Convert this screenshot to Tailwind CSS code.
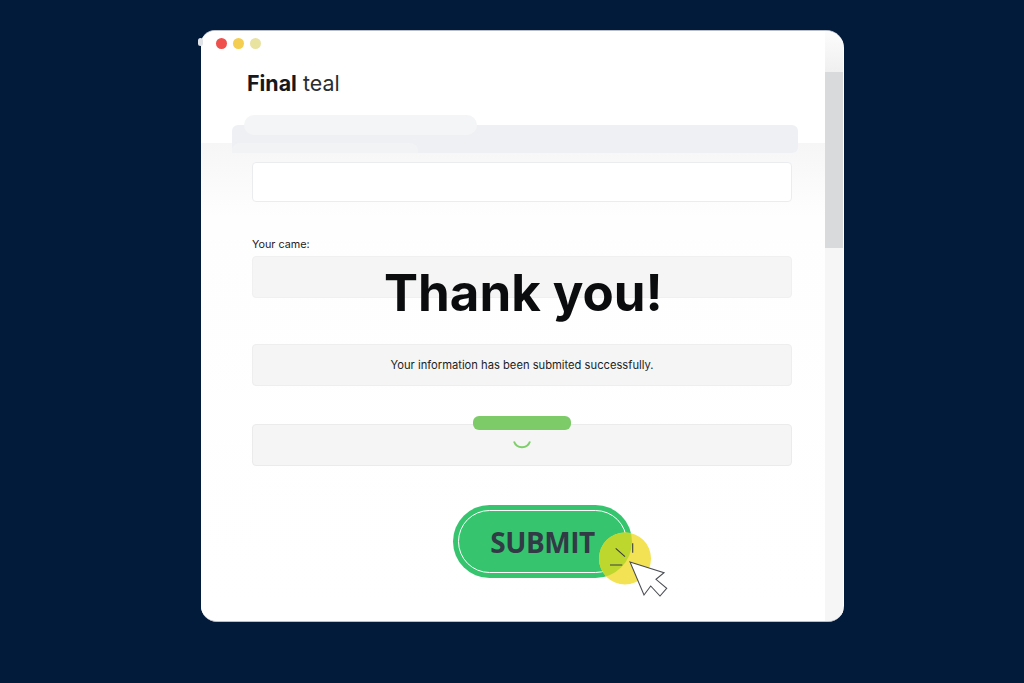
<!DOCTYPE html>
<html>
<head>
<meta charset="utf-8">
<script src="https://cdn.jsdelivr.net/npm/@tailwindcss/browser@4"></script>
</head>
<body class="m-0 w-[1024px] h-[683px] overflow-hidden bg-[#031b3a] font-['Inter',sans-serif]">
  <div class="pt-[30px] pl-[201px]">
    <div class="relative flex w-[643px] h-[592px] bg-white rounded-tl-[14px] rounded-tr-[18px] rounded-b-[16px] overflow-hidden border-t border-b border-[#b9bec8]">
      <main class="w-[624px] flex flex-col bg-[linear-gradient(to_bottom,#fff_112px,#f6f6f7_112px,#fefefe_185px,#fff_100%)]">
        <div class="flex gap-[6px] pl-[15px] pt-[7px]">
          <span class="w-[11px] h-[11px] rounded-full bg-[#f0504c]"></span>
          <span class="w-[11px] h-[11px] rounded-full bg-[#f4ce50]"></span>
          <span class="w-[11px] h-[11px] rounded-full bg-[#e9e3a0]"></span>
        </div>
        <h1 class="mt-[20px] ml-[46px] text-[21.400px] leading-[28px] font-normal text-[#2a2d33]"><b class="font-bold text-[#16181c]">Final</b> teal</h1>
        <div class="relative mt-[28px] ml-[31px] w-[566px] h-[28px] rounded-[6px] bg-[#eef0f3]">
          <div class="absolute left-[12px] top-[-10px] w-[233px] h-[20px] rounded-[10px] bg-[#f4f5f6]"></div>
          <div class="absolute left-0 top-[18px] w-[186px] h-[10px] rounded-t-[8px] bg-[#f2f3f5]"></div>
        </div>
        <div class="mt-[9px] ml-[51px] w-[540px] h-[40px] rounded-[4px] bg-white border border-[#ebecee]"></div>
        <label class="mt-[36px] ml-[51px] h-[14px] text-[10.800px] leading-[14px] text-[#1f2125]">Your came:</label>
        <div class="mt-[4px] ml-[51px] w-[540px] h-[42px] rounded-[4px] bg-[#f5f5f5] border border-[#f0f0f0]"></div>
        <div class="mt-[46px] ml-[51px] w-[540px] h-[42px] rounded-[4px] bg-[#f5f5f5] border border-[#eeeeee] flex items-center justify-center text-[11.200px] text-[#1c1e22]">Your information has been submited successfully.</div>
        <div class="mt-[38px] ml-[51px] w-[540px] h-[42px] rounded-[4px] bg-[#f5f5f5] border border-[#ebebeb] flex justify-center">
          <svg class="mt-[14px]" width="20" height="12" viewBox="0 0 20 12"><path d="M2 2.500A8.500 8.500 0 0 0 18 2.500" fill="none" stroke="#7fce6c" stroke-width="2"/></svg>
        </div>
        <div class="relative mt-[39px] ml-[252px] w-[179px] h-[73px] rounded-full bg-[#36c46f] flex items-center justify-center">
          <div class="absolute inset-[5px] rounded-full border-[1.500px] border-white"></div>
          <span class="relative font-['Open_Sans',sans-serif] font-bold text-[28px] tracking-[-0.500px] text-[#323a46]">SUBMIT</span>
        </div>
      </main>
      <aside class="w-[18px] flex flex-col bg-[linear-gradient(to_bottom,#fcfcfc,#f0f0f0_40px)]">
        <div class="mt-[41px] h-[176px] bg-[#d9dadc]"></div>
        <div class="flex-1 bg-[#f6f6f6]"></div>
      </aside>
    </div>
  </div>

  <!-- Overlays on top of the form -->
  <div class="absolute left-[198px] top-[38px] w-[5px] h-[8px] rounded-full bg-[#dfe3e8]"></div>
  <div class="absolute left-[384px] top-[261px] text-[51px] leading-[64px] font-bold text-[#0b0c0e] whitespace-nowrap">Thank you!</div>
  <div class="absolute left-[473px] top-[416px] w-[98px] h-[14px] rounded-[6px] bg-[#7ccb68]"></div>
  <svg class="absolute left-[590px] top-[525px]" width="85" height="80" viewBox="590 525 85 80">
    <defs>
      <clipPath id="btn"><rect x="453" y="505" width="179" height="73" rx="36.500"/></clipPath>
    </defs>
    <circle cx="625" cy="558.500" r="26" fill="#f3e254"/>
    <circle cx="625" cy="558.500" r="26" fill="#bdd72e" clip-path="url(#btn)"/>
    <path d="M630 562 664 572.700 656 579.300 666.700 588.300 660 596 650.700 586 644 595Z" fill="#fff" stroke="#4a4d52" stroke-width="1.100"/>
    <path d="M615.700 548.300 625 556.700M632.700 543.300V552.700M610 565H622.300" fill="none" stroke="#3a3d42" stroke-width="1.100"/>
  </svg>
</body>
</html>
